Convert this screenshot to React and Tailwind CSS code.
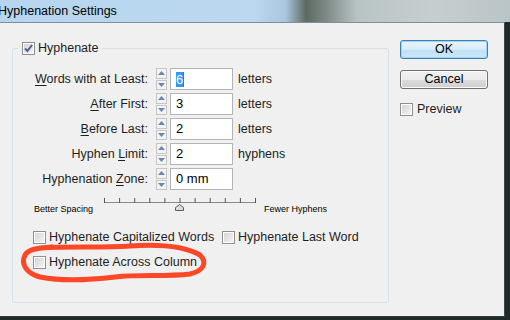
import React from 'react';

const font = { fontFamily: '"Liberation Sans", Arial, sans-serif' };

// Kleine Windows-7-Checkbox
const CheckBox = ({ checked }) => (
  <div className="w-[13px] h-[13px] border border-[#8e8f8f] bg-white p-[1px] shrink-0">
    <div className="w-full h-full bg-[linear-gradient(135deg,#d6d6d6,#f2f2f2)] relative">
      {checked && (
        <svg className="absolute -left-[1px] -top-[1px]" width="11" height="11" viewBox="0 0 11 11">
          <path d="M2 5.5 L4.5 8 L9 2" fill="none" stroke="#4b5f93" strokeWidth="2" />
        </svg>
      )}
    </div>
  </div>
);

const Spinner = () => (
  <div className="w-[11px] h-[22px] flex flex-col gap-[1px] shrink-0">
    <div className="flex-1 border border-[#c6c6c6] bg-[#f3f3f3] flex items-center justify-center">
      <svg width="7" height="4" viewBox="0 0 7 4"><path d="M0 4 L3.5 0 L7 4 Z" fill="#6e84b3" /></svg>
    </div>
    <div className="flex-1 border border-[#c6c6c6] bg-[#f3f3f3] flex items-center justify-center">
      <svg width="7" height="4" viewBox="0 0 7 4"><path d="M0 0 L3.5 4 L7 0 Z" fill="#6e84b3" /></svg>
    </div>
  </div>
);

const FieldRow = ({ label, value, unit, selected }) => (
  <div className="flex items-center h-[22px]">
    <div className="w-[135px] text-right text-[12.5px] text-[#1e1e1e]">{label}</div>
    <div className="ml-[8px]"><Spinner /></div>
    <div className="ml-[3px] w-[63px] h-[22px] border border-[#b4b4b4] bg-white flex items-center pl-[5px] text-[13px] text-black">
      {selected ? (
        <>
          <span className="bg-[#3399ff] text-white leading-[15px]">{value}</span>
          <span className="w-[1px] h-[15px] bg-[#c0501a]" />
        </>
      ) : (
        value
      )}
    </div>
    {unit && <div className="ml-[5px] text-[12.5px] text-[#1e1e1e]">{unit}</div>}
  </div>
);

const U = ({ children }) => <span className="underline underline-offset-2">{children}</span>;

const Slider = () => {
  const ticks = Array.from({ length: 11 }, (_, i) => 1 + i * 15.1);
  return (
    <svg width="156" height="16" viewBox="0 0 156 16">
      <line x1="1" y1="6.5" x2="152" y2="6.5" stroke="#8a8a8a" />
      {ticks.map((x, i) => (
        <line key={i} x1={x + 0.5} y1="2" x2={x + 0.5} y2="7" stroke="#555" />
      ))}
      <path d="M72.5 14.5 L72.5 11.5 L76.5 8.5 L80.5 11.5 L80.5 14.5 Z" fill="#dcdcdc" stroke="#5a5a5a" />
    </svg>
  );
};

export default function App() {
  return (
    <div className="w-[510px] h-[320px] overflow-hidden bg-[#1f2b2b] relative flex flex-col" style={font}>
      {/* Titelleiste */}
      <div className="h-[22px] shrink-0 bg-[linear-gradient(to_right,#b7d5ef_0%,#bcd8f0_50%,#a9c6de_56%,#5d6a63_60%,#7d8a86_64%,#b8c4c4_70%,#c6cfcf_85%,#b9c4c6_100%)] flex items-center">
        <span className="ml-[-2px] text-[12.5px] text-black">Hyphenation Settings</span>
      </div>

      {/* Dialogkörper */}
      <div className="w-[505px] h-[295px] shrink-0 bg-[#f0f0f0] border-t border-[#7f8f9c] border-r border-r-[#3c4747] border-b border-b-[#2c3636] flex items-start">
        {/* Gruppenrahmen */}
        <div className="ml-[12px] mt-[25px] w-[377px] h-[255px] border border-[#d5dfe5] rounded-[3px] relative pt-[19px]">
          <div className="absolute left-[5px] -top-[8px] bg-[#f0f0f0] px-[4px] flex items-center gap-[3px] h-[15px]">
            <CheckBox checked />
            <span className="text-[12.5px] text-[#1e1e1e]">Hyphenate</span>
          </div>

          <div className="flex flex-col gap-[3px]">
            <FieldRow label={<><U>W</U>ords with at Least:</>} value="6" unit="letters" selected />
            <FieldRow label={<><U>A</U>fter First:</>} value="3" unit="letters" />
            <FieldRow label={<><U>B</U>efore Last:</>} value="2" unit="letters" />
            <FieldRow label={<>Hyphen <U>L</U>imit:</>} value="2" unit="hyphens" />
            <FieldRow label={<>Hyphenation <U>Z</U>one:</>} value="0 mm" />
          </div>

          {/* Regler */}
          <div className="flex items-start mt-[6px] pl-[21px]">
            <div className="w-[69px] mt-[8px] text-[9px] leading-[11px] text-black">Better Spacing</div>
            <Slider />
            <div className="ml-[5px] mt-[8px] text-[9px] leading-[11px] text-black">Fewer Hyphens</div>
          </div>

          {/* Optionen */}
          <div className="flex items-center mt-[15px] pl-[20px] h-[15px]">
            <CheckBox />
            <span className="ml-[3px] w-[173px] text-[12.5px] text-[#1e1e1e]">Hyphenate Capitalized Words</span>
            <CheckBox />
            <span className="ml-[3px] text-[12.5px] text-[#1e1e1e]">Hyphenate Last Word</span>
          </div>
          <div className="flex items-center mt-[10px] pl-[20px] h-[15px]">
            <CheckBox />
            <span className="ml-[3px] text-[12.5px] text-[#1e1e1e]">Hyphenate Across Column</span>
          </div>
        </div>

        {/* Schaltflächen */}
        <div className="ml-[11px] mt-[17px] w-[88px] flex flex-col">
          <button className="h-[19px] rounded-[3px] border border-[#3c7fb1] bg-[linear-gradient(#eaf5fc,#d6ebf9_50%,#bfe0f6_51%,#cde7f8)] shadow-[inset_0_0_0_1px_#9fd4f4] text-[12.5px] text-black leading-none">
            OK
          </button>
          <button className="mt-[11px] h-[19px] rounded-[3px] border border-[#707070] bg-[linear-gradient(#f2f2f2,#ebebeb_50%,#dddddd_51%,#cfcfcf)] shadow-[inset_0_0_0_1px_#fbfbfb] text-[12.5px] text-black leading-none">
            Cancel
          </button>
          <div className="mt-[11px] flex items-center gap-[4px]">
            <CheckBox />
            <span className="text-[12.5px] text-[#1e1e1e]">Preview</span>
          </div>
        </div>
      </div>

      {/* Rote Markierung */}
      <svg className="absolute left-0 top-0 pointer-events-none" width="510" height="320" viewBox="0 0 510 320">
        <path
          d="M40 248 C70 246 100 248 130 246 C160 244 186 247 200 255 C208 263 203 271 190 274 C165 277 140 274 115 277 C90 280 60 281 40 277 C25 273 21 263 25 255 C28 250 35 248 52 247"
          fill="none"
          stroke="#ff3815"
          strokeWidth="5"
          strokeLinecap="round"
          strokeLinejoin="round"
          opacity="0.92"
        />
      </svg>
    </div>
  );
}
